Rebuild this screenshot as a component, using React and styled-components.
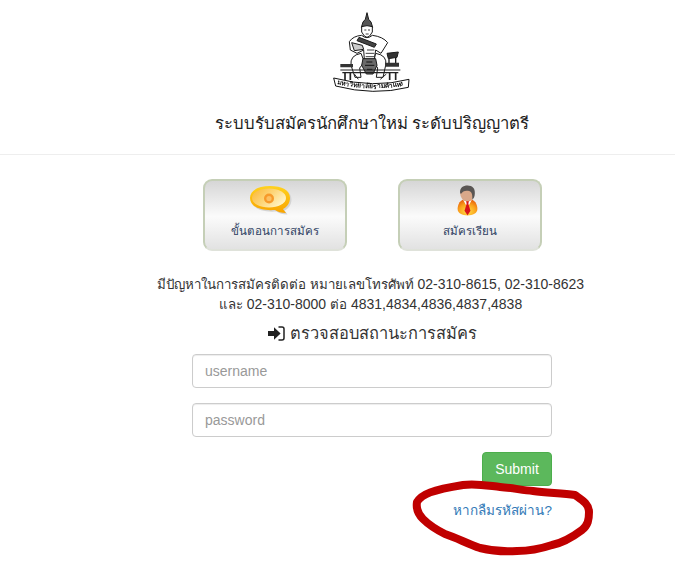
import styled, { createGlobalStyle } from "styled-components";

const GlobalStyle = createGlobalStyle`
  html, body {
    margin: 0;
    background: #fff;
  }
  body {
    font-family: "Liberation Sans", "Noto Sans", sans-serif;
    font-size: 14px;
    color: #333;
  }
`;

function Logo() {
  return (
    <LogoSvg width="110" height="100" viewBox="0 0 330 300">
      <g fill="none" stroke="#1a1a1a" strokeWidth="3" strokeLinejoin="round">
        {/* crown and head */}
        <path d="M150 38 L145 58 L138 66 L133 82 L167 82 L162 66 L155 58 Z" fill="#555" />
        <path d="M134 80 Q150 74 166 80 L166 96 Q158 112 150 112 Q142 112 134 96 Z" fill="#fff" />
        <path d="M142 90 H148 M153 90 H159 M146 102 H155" strokeWidth="2.5" />
        {/* torso and arms */}
        <path d="M134 106 Q108 108 97 125 L100 150 L120 160 L140 150 L142 178 L172 178 L176 150 L192 160 L212 128 Q198 110 166 106 Q150 120 134 106 Z" fill="#fff" />
        <path d="M126 112 L178 132 L172 142 L120 122 Z" fill="#444" />
        <path d="M104 128 L136 136 L140 148 L112 152 Z" fill="#ccc" />
        <path d="M150 150 H172 M146 160 H172 M146 170 H172" strokeWidth="2.5" />
        {/* lap and legs */}
        <path d="M132 160 Q98 166 102 196 L114 232 L132 232 L128 204 L142 186 Z" fill="#fff" />
        <path d="M176 160 Q212 166 206 196 L198 232 L178 232 L182 204 L170 186 Z" fill="#fff" />
        <path d="M138 176 H176 L180 196 L168 222 H148 L134 196 Z" fill="#6a6a6a" />
        <path d="M148 186 L166 186 M144 196 L172 196 M150 208 L166 208" stroke="#111" strokeWidth="3" />
        {/* side table */}
        <path d="M210 160 L244 156 L240 172 L214 176 Z" fill="#333" />
        <path d="M216 176 V190 M236 174 V190" strokeWidth="4" />
      </g>
      {/* base */}
      <path d="M70 192 H108 V202 H70 Z M204 188 H246 V200 H204 Z" fill="#333" />
      <path d="M70 210 H250 M76 218 H244" stroke="#222" strokeWidth="3.5" />
      <path d="M84 218 V240 M100 218 V240 M218 218 V240 M236 218 V240" stroke="#222" strokeWidth="5" />
      <path d="M112 222 L124 238 M190 238 L208 222" stroke="#222" strokeWidth="3" fill="none" />
      {/* name banner */}
      <path d="M50 234 Q170 266 276 238 L274 262 Q170 288 56 258 Z" fill="#fff" stroke="#111" strokeWidth="3" />
      <path id="bannerLine" d="M60 252 Q170 278 270 254" fill="none" />
      <text fontSize="20" fontWeight="700" fontFamily="'Noto Sans', 'Liberation Sans', sans-serif" fill="#111">
        <textPath href="#bannerLine">มหาวิทยาลัยรามคำแหง</textPath>
      </text>
    </LogoSvg>
  );
}

function BubbleIcon() {
  const outline = "M1 13 C1 5 10 1 21 1 C33 1 41 5 41 13 C41 18 38 22 34 24 L37 28 Q30 28 26 25 C12 26 1 22 1 13 Z";
  return (
    <svg width="43" height="30" viewBox="0 0 43 30">
      <defs>
        <linearGradient id="bubbleEdge" x1="0" y1="0" x2="0" y2="1">
          <stop offset="0" stopColor="#ffd21e" />
          <stop offset="1" stopColor="#f9a400" />
        </linearGradient>
        <linearGradient id="bubbleFill" x1="0" y1="0" x2="1" y2="0.6">
          <stop offset="0" stopColor="#fbb634" />
          <stop offset="0.55" stopColor="#fdd67a" />
          <stop offset="1" stopColor="#fff3c4" />
        </linearGradient>
      </defs>
      <path d={outline} fill="#d4d4d4" transform="translate(1.5 1.5)" />
      <path d={outline} fill="url(#bubbleEdge)" />
      <ellipse cx="20" cy="13" rx="17" ry="9.5" fill="url(#bubbleFill)" />
      <circle cx="20" cy="13.5" r="5" fill="#f79a2a" />
      <circle cx="20" cy="13.5" r="2.6" fill="#fcc062" />
    </svg>
  );
}

function PersonIcon() {
  return (
    <svg width="21" height="31" viewBox="0 0 24 36">
      <defs>
        <radialGradient id="personBody" cx="0.5" cy="0.75" r="0.7">
          <stop offset="0" stopColor="#ffe04a" />
          <stop offset="0.6" stopColor="#fba31c" />
          <stop offset="1" stopColor="#e8640c" />
        </radialGradient>
      </defs>
      <path d="M12 16 C3 16 0.5 23 0.5 28 C0.5 33 6 35.5 12 35.5 C18 35.5 23.5 33 23.5 28 C23.5 23 21 16 12 16 Z" fill="url(#personBody)" />
      <path d="M7 17 L12 20 L17 17 L14 23 L10 23 Z" fill="#fff" />
      <path d="M10.5 19 L13.5 19 L13 22 L15.5 30 L12 35 L8.5 30 L11 22 Z" fill="#d8141a" />
      <ellipse cx="11.5" cy="10" rx="8" ry="9" fill="#d9a88a" />
      <path d="M3.5 10 C2.5 3 7 0.5 12 0.5 C18 0.5 21 4 20.5 10 C20.5 14 19 16 17.5 17 C18 11 17 8 14 7 C10 6 6 7 5 10 Z" fill="#5a5654" />
    </svg>
  );
}

function LoginIcon() {
  return (
    <svg width="17" height="15" viewBox="0 0 17 15">
      <path d="M0 5 H6 V1.2 L12.6 7.5 L6 13.8 V10 H0 Z" fill="#222" />
      <path d="M10.5 1 H14 Q16 1 16 3 V12 Q16 14 14 14 H10.5" fill="none" stroke="#222" strokeWidth="1.5" />
    </svg>
  );
}

export default function App() {
  return (
    <Page>
      <GlobalStyle />
      <Header>
        <Logo />
        <Title>ระบบรับสมัครนักศึกษาใหม่ ระดับปริญญาตรี</Title>
      </Header>
      <Divider />
      <Content>
        <MenuRow>
          <MenuButton>
            <MenuIcon $shift={8}>
              <BubbleIcon />
            </MenuIcon>
            ขั้นตอนการสมัคร
          </MenuButton>
          <MenuButton>
            <MenuIcon $shift={4}>
              <PersonIcon />
            </MenuIcon>
            สมัครเรียน
          </MenuButton>
        </MenuRow>
        <Notice>
          <ThaiText>มีปัญหาในการสมัครติดต่อ หมายเลขโทรศัพท์</ThaiText> 02-310-8615, 02-310-8623
          <br />
          <ThaiText>และ</ThaiText> 02-310-8000 <ThaiText>ต่อ</ThaiText> 4831,4834,4836,4837,4838
        </Notice>
        <FormTitle>
          <LoginIcon /> ตรวจสอบสถานะการสมัคร
        </FormTitle>
        <Form onSubmit={(e) => e.preventDefault()}>
          <Input type="text" placeholder="username" />
          <Input type="password" placeholder="password" />
          <Submit type="submit">Submit</Submit>
          <ForgotWrap>
            <ForgotLink href="#">หากลืมรหัสผ่าน?</ForgotLink>
            <Scribble width="186" height="82" viewBox="0 0 186 82">
              <path
                d="M5 24 C10 16 20 12 51 7 C64 5 78 8 88 9 C100 10 110 12 121 13 C135 15 150 15 163 17 C170 22 177 26 177 34 C177 42 176 47 170 52 C162 58 150 65 140 67 C128 71 117 73 105 73 C92 74 80 73 68 70 C56 66 45 60 33 56 C25 52 17 47 11 41 C6 36 4 30 5 24 Z"
                fill="none"
                stroke="#c00000"
                strokeWidth="8"
                strokeLinejoin="round"
              />
            </Scribble>
          </ForgotWrap>
        </Form>
      </Content>
    </Page>
  );
}

const Page = styled.div`
  width: 675px;
  height: 568px;
  overflow: hidden;
  background: #fff;
`;

const Header = styled.header`
  display: flex;
  flex-direction: column;
  align-items: center;
  padding-left: 69px;
  height: 154px;
`;

const LogoSvg = styled.svg`
  filter: blur(0.4px);
`;

const Title = styled.h1`
  margin: 12px 0 0;
  font-size: 16.7px;
  line-height: 24px;
  font-weight: 500;
  color: #222;
`;

const Divider = styled.hr`
  margin: 0;
  border: 0;
  border-top: 1px solid #eee;
`;

const Content = styled.main`
  display: flex;
  flex-direction: column;
  align-items: center;
  padding: 24px 0 0 69px;
`;

const MenuRow = styled.div`
  display: flex;
  gap: 51px;
`;

const MenuButton = styled.a`
  box-sizing: border-box;
  width: 144px;
  height: 72px;
  display: flex;
  flex-direction: column;
  align-items: center;
  padding-top: 4px;
  border: 2px solid #c5cfb7;
  border-bottom-color: #dfe2da;
  border-radius: 9px;
  background: linear-gradient(#d6d6d6, #fbfbfb 52%, #e2e2e2);
  font-size: 11.6px;
  line-height: 16px;
  color: #2f3f63;
`;

const MenuIcon = styled.div`
  height: 38px;
  margin-right: ${(p) => p.$shift}px;
`;

const Notice = styled.p`
  margin: 23px 3px 0 0;
  font-size: 14px;
  line-height: 20px;
  text-align: center;
  color: #333;
`;

const ThaiText = styled.span`
  font-size: 13.3px;
  line-height: 1;
`;

const FormTitle = styled.h3`
  margin: 7px 0 0;
  display: flex;
  align-items: center;
  gap: 5px;
  font-size: 16.4px;
  line-height: 24px;
  font-weight: 500;
  color: #333;
`;

const Form = styled.form`
  width: 360px;
  margin-top: 9px;
  display: flex;
  flex-direction: column;
  gap: 15px;
`;

const Input = styled.input`
  box-sizing: border-box;
  width: 100%;
  height: 34px;
  padding: 6px 12px;
  border: 1px solid #ccc;
  border-radius: 4px;
  box-shadow: inset 0 1px 1px rgba(0, 0, 0, 0.075);
  font: 14px "Liberation Sans", sans-serif;
  color: #555;

  &::placeholder {
    color: #999;
    opacity: 1;
  }
`;

const Submit = styled.button`
  align-self: flex-end;
  width: 70px;
  height: 34px;
  border: 1px solid #4cae4c;
  border-radius: 4px;
  background: #5cb85c;
  color: #fff;
  font: 14px "Liberation Sans", sans-serif;
`;

const ForgotWrap = styled.div`
  position: relative;
  margin-top: -1px;
  line-height: 20px;
  text-align: right;
`;

const ForgotLink = styled.a`
  font-size: 13.5px;
  color: #337ab7;
  text-decoration: none;
`;

const Scribble = styled.svg`
  position: absolute;
  left: 220px;
  top: -22px;
  pointer-events: none;
`;
